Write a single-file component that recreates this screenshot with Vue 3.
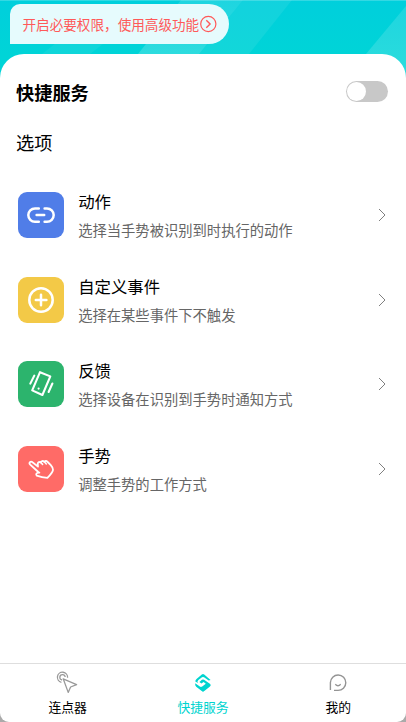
<script setup>
const items = [
  { id: 'action', title: '动作', desc: '选择当手势被识别到时执行的动作' },
  { id: 'event', title: '自定义事件', desc: '选择在某些事件下不触发' },
  { id: 'feedback', title: '反馈', desc: '选择设备在识别到手势时通知方式' },
  { id: 'gesture', title: '手势', desc: '调整手势的工作方式' },
]
</script>

<template>
  <div class="screen">
    <header class="hero">
      <svg class="rays" viewBox="0 0 406 90" preserveAspectRatio="none">
        <defs>
          <linearGradient id="ray" x1="0" y1="0" x2="0" y2="1">
            <stop offset="0" stop-color="#fff" stop-opacity=".12" />
            <stop offset="1" stop-color="#fff" stop-opacity=".18" />
          </linearGradient>
        </defs>
        <path d="M181 0H243L199 54H138Z" fill="url(#ray)" />
        <path d="M243 0H292L249 54H199Z" fill="#fff" opacity=".07" />
        <path d="M60 40H108L90 54H42Z" fill="#fff" opacity=".06" />
        <path d="M406 6V90H340L366 54Z" fill="url(#ray)" />
        <path d="M0 0H406V1H0Z" fill="#fff" opacity=".2" />
      </svg>
      <div class="notice">
        <span>开启必要权限，使用高级功能</span>
        <svg width="18" height="18" viewBox="0 0 18 18" fill="none" stroke="#ff5959">
          <circle cx="9.3" cy="9" r="7.6" stroke-width="1.2" />
          <path d="M7.3 5.2L11.1 9L7.3 12.8" stroke-width="1.4" />
        </svg>
      </div>
    </header>

    <main class="sheet">
      <div class="heading">
        <h1>快捷服务</h1>
        <span class="switch"><span class="knob"></span></span>
      </div>
      <h2>选项</h2>
      <ul class="list">
        <li v-for="item in items" :key="item.id" class="row">
          <span class="tile" :class="item.id">
            <svg width="46" height="46" viewBox="0 0 46 46" fill="none" stroke="#fff" stroke-width="2.5" stroke-linecap="round" stroke-linejoin="round">
              <g v-if="item.id === 'action'">
                <path d="M20.8 16.4H17a6.7 6.7 0 0 0 0 13.4h3.8M26.6 16.4H29a6.7 6.7 0 0 1 0 13.4h-2.4M18.6 23.1h7.6" />
              </g>
              <g v-else-if="item.id === 'event'">
                <circle cx="23" cy="23" r="11.7" />
                <path d="M17.8 23h10.6M23 17.7v10.6" />
              </g>
              <g v-else-if="item.id === 'feedback'">
                <path d="M22 11.2L32.3 15.4L24.4 34L14.2 29.4Z" stroke-width="2.1" />
                <path d="M16.3 14.6L12.3 22.6M34.4 22.5L30.6 31" stroke-width="2.1" />
                <circle cx="20.6" cy="27.6" r="1.1" fill="#fff" stroke="none" />
              </g>
              <g v-else stroke-width="1.8">
                <path d="M20.3 26L12.2 18.6c-1.8-1.8.4-4 2.3-2.4L20 20.6L19.7 17.6q.8-2.4 2.9-1.2q1.5-2.4 3.7-.7q1.8-1.5 3.4.3l3.1 3.2q2 2.2 2.2 4.6q-.4 2.7-5.6 8.1q-5.6-.4-10.6-2.2q-1.4-1.6.4-2.8l2.2-.2Z" />
                <path d="M22.6 16.4l2 2M26.3 15.7l2 2.2" stroke-width="1.5" />
              </g>
            </svg>
          </span>
          <div class="copy">
            <h3>{{ item.title }}</h3>
            <p>{{ item.desc }}</p>
          </div>
          <svg class="chevron" width="8" height="14" viewBox="0 0 8 14" fill="none" stroke="#808080">
            <path d="M1 1L7 7L1 13" />
          </svg>
        </li>
      </ul>
    </main>

    <nav class="tabs">
      <div class="tab">
        <svg width="24" height="24" viewBox="0 0 24 24" fill="none" stroke="#999" stroke-width="1.3" stroke-linejoin="round">
          <path d="M5.4 11.3A5.1 5.1 0 1 1 11.6 6.7M6.1 9A2.7 2.7 0 1 1 9.2 6" />
          <path d="M7.2 7.8L20.6 13.6L14.6 16L12.2 21.4Z" />
        </svg>
        <span>连点器</span>
      </div>
      <div class="tab active">
        <svg width="24" height="24" viewBox="0 0 24 24" fill="none" stroke-linejoin="round" stroke-linecap="round">
          <path d="M4.3 10.6Q4.2 9.2 5.5 8.1L10.8 3.6Q12 2.6 13.2 3.6L19.6 9L17.7 9.6L13 6.3Q12 5.7 11 6.3L7.4 9.1Q5.6 10.4 7 12Z" fill="#00d4cf" />
          <path d="M4.2 12.2L8.8 15.6Q10 16.4 11.2 15.5L14.8 12.7L12.6 11L10.4 12.5L8.4 11L10.9 8.8Q12 8 13.1 8.8L19.2 13Q20.4 14.2 19 15.5L13.3 20.1Q12 21.2 10.7 20.1L5.2 15.7Q3.8 14.3 4.2 12.2Z" fill="#00d4cf" />
        </svg>
        <span>快捷服务</span>
      </div>
      <div class="tab">
        <svg width="24" height="24" viewBox="0 0 24 24" fill="none" stroke="#949494" stroke-width="1.4">
          <path d="M4.4 19V11.6A7.7 7.7 0 1 1 12 19.4H8" />
          <path d="M9.3 13.3Q12 16.2 14.7 13.3" />
        </svg>
        <span>我的</span>
      </div>
    </nav>
  </div>
</template>

<style>
body { margin: 0; background: #aaa; }
</style>

<style scoped>
* { box-sizing: border-box; }
.screen {
  display: flex;
  flex-direction: column;
  width: 406px;
  height: 722px;
  overflow: hidden;
  background: #fff;
  border-radius: 0 0 9px 9px;
  color: #000;
  font-family: "Noto Sans CJK SC", sans-serif;
}
h1, h2, h3, p, ul { margin: 0; padding: 0; font-weight: 400; }
.hero {
  position: relative;
  flex: none;
  height: 90px;
  padding: 4px 10px;
  background: linear-gradient(#00cfdc, #00d4d7 55px);
}
.rays { position: absolute; left: 0; top: 0; width: 406px; height: 90px; }
.notice {
  position: relative;
  display: flex;
  align-items: center;
  width: 219px;
  height: 40px;
  padding-left: 12.5px;
  border-radius: 10px 20px 20px 0;
  background: #e6fbfd;
  color: #ff5959;
  font-size: 13.6px;
  line-height: 20px;
  white-space: nowrap;
}
.notice svg { flex: none; }
.sheet {
  position: relative;
  flex: 1;
  min-height: 0;
  margin-top: -36px;
  padding: 21px 16px 0;
  border-radius: 24px 24px 0 0;
  background: #fff;
}
.heading { display: flex; align-items: center; justify-content: space-between; height: 32px; padding-right: 2px; }
h1 { padding-top: 2px; font-size: 18.2px; font-weight: 700; line-height: 30px; }
.switch { display: flex; width: 42px; height: 21px; padding: 1px; border-radius: 11px; background: #c8c8c8; }
.knob { width: 19px; height: 19px; border-radius: 50%; background: #fff; }
h2 { margin-top: 21px; font-size: 18.2px; line-height: 28px; }
.list { margin-top: 17px; list-style: none; }
.row { display: flex; align-items: center; height: 84.6px; padding: 0 4px 0 2px; }
.tile { display: flex; width: 46px; height: 46px; border-radius: 9px; }
.action { background: #507de8; }
.event { background: #f3c947; }
.feedback { background: #2cb46d; }
.gesture { background: #ff6b67; }
.copy { flex: 1; margin-left: 14.2px; white-space: nowrap; }
h3 { font-size: 16.4px; line-height: 26px; }
p { margin-top: 3px; color: #666; font-size: 14.3px; line-height: 25px; }
.tabs { display: flex; flex: none; height: 59px; border-top: 1px solid #dedede; }
.tab { display: flex; flex: 1; flex-direction: column; align-items: center; padding-top: 7px; font-size: 12.8px; line-height: 20px; }
.tab span { margin-top: 2px; }
.active { color: #00d4cf; }
</style>
